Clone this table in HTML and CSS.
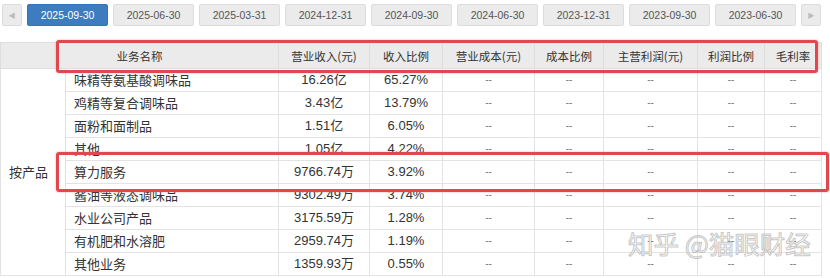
FILE: index.html
```html
<!DOCTYPE html>
<html lang="zh">
<head>
<meta charset="utf-8">
<link rel="stylesheet" href="styles.css">
</head>
<body>
<div class="page">
  <div class="tabs">
    <span class="arrow">&#9664;</span>
    <span class="tab active">2025-09-30</span>
    <span class="tab">2025-06-30</span>
    <span class="tab">2025-03-31</span>
    <span class="tab">2024-12-31</span>
    <span class="tab">2024-09-30</span>
    <span class="tab">2024-06-30</span>
    <span class="tab">2023-12-31</span>
    <span class="tab">2023-09-30</span>
    <span class="tab">2023-06-30</span>
    <span class="arrow">&#9654;</span>
  </div>
  <table class="biz">
    <colgroup>
      <col class="c1"><col class="c2"><col class="c3"><col class="c4"><col class="c5"><col class="c6"><col class="c7"><col class="c8"><col class="c9">
    </colgroup>
    <thead>
      <tr>
        <th colspan="2">业务名称</th>
        <th>营业收入(元)</th>
        <th>收入比例</th>
        <th>营业成本(元)</th>
        <th>成本比例</th>
        <th>主营利润(元)</th>
        <th>利润比例</th>
        <th>毛利率</th>
      </tr>
    </thead>
    <tbody>
      <tr><td class="group" rowspan="9">按产品</td><td class="name">味精等氨基酸调味品</td><td>16.26亿</td><td>65.27%</td><td class="d">--</td><td class="d">--</td><td class="d">--</td><td class="d">--</td><td class="d">--</td></tr>
      <tr><td class="name">鸡精等复合调味品</td><td>3.43亿</td><td>13.79%</td><td class="d">--</td><td class="d">--</td><td class="d">--</td><td class="d">--</td><td class="d">--</td></tr>
      <tr><td class="name">面粉和面制品</td><td>1.51亿</td><td>6.05%</td><td class="d">--</td><td class="d">--</td><td class="d">--</td><td class="d">--</td><td class="d">--</td></tr>
      <tr><td class="name">其他</td><td>1.05亿</td><td>4.22%</td><td class="d">--</td><td class="d">--</td><td class="d">--</td><td class="d">--</td><td class="d">--</td></tr>
      <tr><td class="name">算力服务</td><td>9766.74万</td><td>3.92%</td><td class="d">--</td><td class="d">--</td><td class="d">--</td><td class="d">--</td><td class="d">--</td></tr>
      <tr><td class="name">酱油等液态调味品</td><td>9302.49万</td><td>3.74%</td><td class="d">--</td><td class="d">--</td><td class="d">--</td><td class="d">--</td><td class="d">--</td></tr>
      <tr><td class="name">水业公司产品</td><td>3175.59万</td><td>1.28%</td><td class="d">--</td><td class="d">--</td><td class="d">--</td><td class="d">--</td><td class="d">--</td></tr>
      <tr><td class="name">有机肥和水溶肥</td><td>2959.74万</td><td>1.19%</td><td class="d">--</td><td class="d">--</td><td class="d">--</td><td class="d">--</td><td class="d">--</td></tr>
      <tr><td class="name">其他业务</td><td>1359.93万</td><td>0.55%</td><td class="d">--</td><td class="d">--</td><td class="d">--</td><td class="d">--</td><td class="d">--</td></tr>
    </tbody>
  </table>
  <div class="mark mark-head"></div>
  <div class="mark mark-row"></div>
  <div class="watermark">知乎 @猫眼财经</div>
</div>
</body>
</html>
```

FILE: styles.css
```css
html, body {
  margin: 0;
  padding: 0;
  background: #fff;
}
.page {
  position: relative;
  width: 830px;
  height: 278px;
  overflow: hidden;
  font-family: "Liberation Sans", "Noto Sans CJK SC", sans-serif;
  color: #333;
}
.tabs {
  display: flex;
  gap: 5px;
  padding: 4px 0 0 2px;
  height: 22px;
}
.tab, .arrow {
  box-sizing: border-box;
  height: 22px;
  border: 1px solid #dcdcdc;
  background: #ebebeb;
  border-radius: 2px;
  display: flex;
  align-items: center;
  justify-content: center;
}
.tab {
  width: 81px;
  font-size: 10.5px;
  color: #555;
  font-family: "Liberation Sans", sans-serif;
}
.tab.active {
  background: #3d7dbf;
  border-color: #3774b3;
  color: #fff;
}
.arrow {
  width: 20px;
  font-size: 7px;
  color: #bbb;
}
.biz {
  margin-top: 16px;
  border-collapse: collapse;
  table-layout: fixed;
  width: 821px;
  font-size: 13px;
}
.c1 { width: 65px; }
.c2 { width: 213px; }
.c3 { width: 91px; }
.c4 { width: 73px; }
.c5 { width: 92px; }
.c6 { width: 69px; }
.c7 { width: 94px; }
.c8 { width: 67px; }
.c9 { width: 57px; }
.biz th {
  height: 25px;
  background: #ebebeb;
  font-weight: normal;
  font-size: 11.5px;
  color: #333;
  border: 1px solid #dedede;
  padding: 0;
  white-space: nowrap;
  font-family: "Noto Sans CJK SC", sans-serif;
}
.biz td {
  height: 22px;
  padding: 0;
  border: 1px solid #e3e3e3;
  text-align: center;
  white-space: nowrap;
  line-height: 22px;
}
.biz td.name {
  text-align: left;
  padding-left: 8px;
  font-family: "Noto Sans CJK SC", sans-serif;
}
.biz td.group {
  text-align: left;
  padding-left: 8px;
  font-family: "Noto Sans CJK SC", sans-serif;
}
.biz td.d {
  font-size: 10px;
  color: #777;
}
.mark {
  position: absolute;
  box-sizing: border-box;
  border: 3px solid #e2474d;
  border-radius: 3px;
  box-shadow: 0 0 2px rgba(226, 71, 77, 0.5);
}
.mark-head {
  left: 56px;
  top: 40px;
  width: 762px;
  height: 33px;
}
.mark-row {
  left: 56px;
  top: 152px;
  width: 773px;
  height: 40px;
}
.watermark {
  position: absolute;
  left: 628px;
  top: 228px;
  font-family: "Noto Sans CJK SC", sans-serif;
  font-size: 25.5px;
  line-height: 30px;
  color: rgba(255, 255, 255, 0.8);
  -webkit-text-stroke: 1px rgba(150, 150, 150, 0.55);
  white-space: nowrap;
}
```
